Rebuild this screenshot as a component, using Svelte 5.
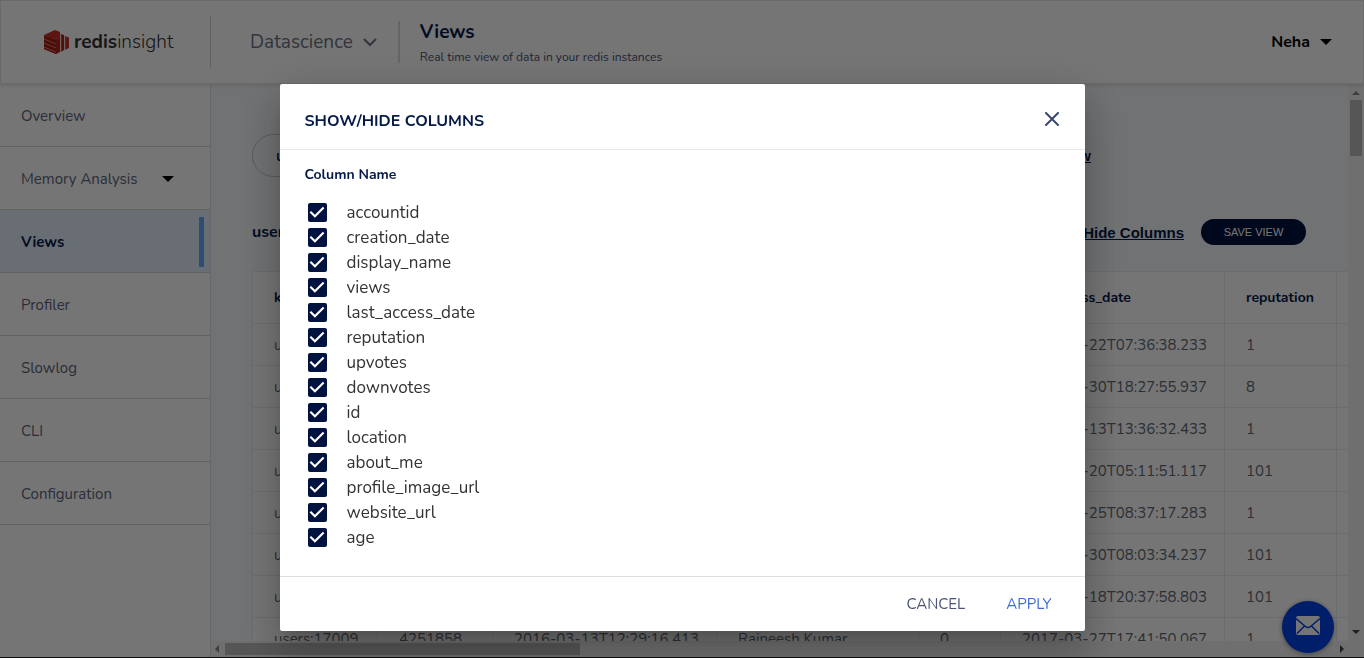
<script>
  const nav = ['Overview', 'Memory Analysis', 'Views', 'Profiler', 'Slowlog', 'CLI', 'Configuration'];
  const headers = ['key', 'accountid', 'creation_date', 'display_name', 'views', 'last_access_date', 'reputation', ''];
  const widths = [125, 115, 224, 202, 82, 224, 112, 120];
  const rows = [
    ['users:', '', '', '', '', '2017-02-22T07:36:38.233', '1', ''],
    ['users:', '', '', '', '', '2017-03-30T18:27:55.937', '8', ''],
    ['users:', '', '', '', '', '2016-03-13T13:36:32.433', '1', ''],
    ['users:', '', '', '', '', '2017-03-20T05:11:51.117', '101', ''],
    ['users:', '', '', '', '', '2017-02-25T08:37:17.283', '1', ''],
    ['users:', '', '', '', '', '2017-03-30T08:03:34.237', '101', ''],
    ['users:', '', '', '', '', '2017-03-18T20:37:58.803', '101', ''],
    ['users:17009', '4251858', '2016-03-13T12:29:16.413', 'Rajneesh Kumar', '0', '2017-03-27T17:41:50.067', '1', '']
  ];
  let columns = $state(
    ['accountid', 'creation_date', 'display_name', 'views', 'last_access_date', 'reputation', 'upvotes',
     'downvotes', 'id', 'location', 'about_me', 'profile_image_url', 'website_url', 'age']
      .map((name) => ({ name, shown: true }))
  );
</script>

<div class="app">
  <header class="top">
    <div class="logo">
      <svg width="26" height="24" viewBox="0 0 26 24" aria-hidden="true">
        <path d="M0 5 11 0 16 2V21L12 24 0 19Z" fill="#c6302b" />
        <path d="M0 5 12 9.500V24L0 19Z" fill="#a41e11" />
        <path d="M12 9 16 7V22L12 24Z" fill="#b0241c" />
        <path d="M0 9 12 14M0 13 12 18M0 17 12 22" stroke="#e08a84" stroke-width=".9" />
        <path d="M0 5 12 9.500 16 7.500" fill="none" stroke="#e4605a" stroke-width=".6" />
        <path d="M17 4 20 5V20L17 22Z" fill="#b02018" />
        <path d="M21 6 25 7.500V18L21 20Z" fill="#c6302b" />
        <path d="M17 4V22M21 6V20" stroke="#e08a84" stroke-width=".7" />
      </svg>
      <span><b>redis</b>insight</span>
    </div>
    <button class="db">Datascience
      <svg width="14" height="9" viewBox="0 0 14 9" aria-hidden="true"><path d="M1 1 7 7 13 1" fill="none" stroke="currentColor" stroke-width="2" /></svg>
    </button>
    <div class="page">
      <h1>Views</h1>
      <p>Real time view of data in your redis instances</p>
    </div>
    <button class="user">Neha <i class="caret"></i></button>
  </header>

  <div class="shell">
    <nav>
      {#each nav as item}
        <a href="#{item}" class:active={item === 'Views'}>
          {item}{#if item === 'Memory Analysis'}<i class="caret"></i>{/if}
        </a>
      {/each}
    </nav>

    <div class="scroller">
      <main>
        <div class="query">
          <input type="text" aria-label="Key pattern" value="users:*" />
          <a href="#new">Add new view</a>
        </div>
        <div class="toolbar">
          <h2>users</h2>
          <a href="#columns">Show/Hide Columns</a>
          <button>SAVE VIEW</button>
        </div>
        <table>
          <colgroup>
            {#each widths as w}<col style="width: {w}px" />{/each}
          </colgroup>
          <thead>
            <tr>{#each headers as h}<th>{h}</th>{/each}</tr>
          </thead>
          <tbody>
            {#each rows as row}
              <tr>{#each row as cell}<td>{cell}</td>{/each}</tr>
            {/each}
          </tbody>
        </table>
      </main>
      <div class="bar vertical" aria-hidden="true">
        <i class="arrow up"></i><span class="thumb"></span><i class="arrow down"></i>
      </div>
      <div class="bar horizontal" aria-hidden="true">
        <i class="arrow left"></i><span class="thumb"></span><i class="arrow right"></i>
      </div>
      <div class="corner"></div>
    </div>
  </div>

  <button class="mail" aria-label="Send a message">
    <svg width="24" height="19" viewBox="0 0 24 19" aria-hidden="true">
      <rect width="24" height="19" rx="2" fill="#fff" />
      <path d="M0 2.500 9.500 10.500Q12 12.500 14.500 10.500L24 2.500M1 17.500 8.500 10M23 17.500 15.500 10" fill="none" stroke="#0042e6" stroke-width="1.500" />
    </svg>
  </button>
</div>

<div class="backdrop">
  <div class="dialog" role="dialog" aria-modal="true" aria-labelledby="dialog-title">
    <div class="head">
      <h2 id="dialog-title">SHOW/HIDE COLUMNS</h2>
      <button aria-label="Close">
        <svg width="14" height="14" viewBox="0 0 14 14" aria-hidden="true"><path d="M1 1 13 13M13 1 1 13" stroke="#3a4870" stroke-width="2" stroke-linecap="round" /></svg>
      </button>
    </div>
    <div class="body">
      <h3>Column Name</h3>
      <ul>
        {#each columns as column}
          <li><label><input type="checkbox" bind:checked={column.shown} />{column.name}</label></li>
        {/each}
      </ul>
    </div>
    <div class="foot">
      <button>CANCEL</button>
      <button class="apply">APPLY</button>
    </div>
  </div>
</div>

<style>
  :global(body) {
    margin: 0;
    overflow: hidden;
    background: #fff;
  }
  .app, .backdrop {
    font-family: Nunito, "Open Sans", "Noto Sans", sans-serif;
  }
  .app *, .backdrop * {
    box-sizing: border-box;
  }
  h1, h2, h3, p, ul {
    margin: 0;
    padding: 0;
  }
  button {
    border: 0;
    padding: 0;
    background: none;
    font-family: inherit;
    cursor: pointer;
  }
  .app {
    display: flex;
    flex-direction: column;
    height: 100vh;
    box-sizing: border-box;
    border-bottom: 1px solid #222;
  }
  .caret {
    border: 6px solid transparent;
    border-top-color: #000;
    border-bottom: 0;
  }

  .top {
    display: flex;
    align-items: center;
    height: 84px;
    flex: none;
    border: 1px solid #e4e4e4;
    box-shadow: 0 1px 4px rgba(0, 0, 0, .15);
    z-index: 1;
  }
  .logo {
    display: flex;
    align-items: center;
    gap: 4px;
    width: 210px;
    height: 52px;
    padding-left: 43px;
    border-right: 1px solid #d0d0d0;
    font-size: 19px;
    font-weight: 300;
    color: #333;
  }
  .logo b {
    font-weight: 700;
  }
  .db {
    display: flex;
    align-items: center;
    gap: 10px;
    height: 42px;
    padding: 0 21px 0 39px;
    border-right: 2px solid #dcdcdc;
    font-size: 19px;
    color: #6c7284;
  }
  .page {
    padding: 2px 0 0 20px;
  }
  h1 {
    font-size: 19px;
    line-height: 28px;
    font-weight: 700;
    color: #061a48;
  }
  .page p {
    font-size: 12px;
    line-height: 22px;
    color: #4a5276;
  }
  .user {
    display: flex;
    align-items: center;
    gap: 10px;
    margin-left: auto;
    padding-right: 31px;
    font-size: 16px;
    font-weight: 700;
    color: #000;
  }

  .shell {
    display: flex;
    flex: 1;
    min-height: 0;
  }
  nav {
    flex: none;
    width: 211px;
    border-right: 1px solid #dde2ea;
  }
  nav a {
    display: flex;
    align-items: center;
    gap: 24px;
    height: 63px;
    padding: 2px 0 0 21px;
    border-bottom: 1px solid #d6d6d6;
    font-size: 15px;
    color: #5e657b;
    text-decoration: none;
  }
  nav a.active {
    justify-content: space-between;
    padding-right: 6px;
    background: #e3effc;
    font-weight: 700;
    color: #061a48;
  }
  nav a.active::after {
    content: "";
    width: 5px;
    height: 50px;
    background: #62a8f8;
  }

  .scroller {
    flex: 1;
    min-width: 0;
    display: grid;
    grid-template: minmax(0, 1fr) 16px / minmax(0, 1fr) 16px;
  }
  main {
    overflow: hidden;
    padding: 50px 0 0 41px;
    background: #f4f8fd;
  }
  .query, .toolbar {
    display: flex;
    align-items: center;
  }
  .query {
    justify-content: space-between;
    padding-right: 257px;
  }
  .query input {
    width: 320px;
    height: 43px;
    padding: 0 23px;
    border: 1px solid #c4c7cc;
    border-radius: 22px;
    background: transparent;
    font: 600 14px "Open Sans", sans-serif;
    color: #061a48;
  }
  .query a, .toolbar a {
    font: 700 15px "Liberation Sans", sans-serif;
    color: #061a48;
  }
  .toolbar {
    gap: 17px;
    padding: 42px 42px 26px 0;
  }
  .toolbar h2 {
    margin-right: auto;
    font-size: 16px;
    line-height: 26px;
    color: #061a48;
  }
  .toolbar button {
    width: 105px;
    height: 26px;
    border-radius: 13px;
    background: #001240;
    font: 400 11px "Liberation Sans", sans-serif;
    color: #fff;
  }
  table {
    table-layout: fixed;
    width: 1204px;
    border-collapse: collapse;
    background: #fff;
    font-size: 15px;
  }
  th, td {
    height: 42px;
    padding: 0 21px;
    border: 1px solid #e8ecf0;
    text-align: left;
    white-space: nowrap;
    color: #646873;
  }
  th {
    height: 52px;
    font-size: 14px;
    font-weight: 700;
    color: #061a48;
  }

  .bar, .corner {
    background: #f1f1f1;
  }
  .bar {
    display: flex;
    align-items: center;
    justify-content: space-between;
  }
  .vertical {
    flex-direction: column;
    padding: 7px 0;
  }
  .horizontal {
    padding: 0 4px;
  }
  .thumb {
    background: #bcbcbc;
  }
  .vertical .thumb {
    width: 12px;
    height: 56px;
    margin: 5px 0 auto;
  }
  .horizontal .thumb {
    width: 355px;
    height: 12px;
    margin: 0 auto 0 6px;
  }
  .arrow {
    border: 4px solid transparent;
  }
  .up { border-top: 0; border-bottom-color: #888; }
  .down { border-bottom: 0; border-top-color: #444; }
  .left { border-left: 0; border-right-color: #888; }
  .right { border-right: 0; border-left-color: #444; }

  .mail {
    position: fixed;
    right: 30px;
    bottom: 5px;
    display: grid;
    place-items: center;
    width: 52px;
    height: 52px;
    padding-bottom: 3px;
    border-radius: 50%;
    background: #0042e6;
    box-shadow: 0 1px 5px rgba(0, 0, 0, .4);
  }

  .backdrop {
    position: fixed;
    inset: 0;
    z-index: 2;
    display: flex;
    justify-content: center;
    align-items: flex-start;
    padding-top: 84px;
    background: rgba(0, 0, 0, .54);
  }
  .dialog {
    width: 805px;
    max-width: 100%;
    border-radius: 2px;
    background: #fff;
    box-shadow: 0 11px 15px -7px rgba(0, 0, 0, .2), 0 24px 38px 3px rgba(0, 0, 0, .14), 0 9px 46px 8px rgba(0, 0, 0, .12);
  }
  .head {
    display: flex;
    align-items: center;
    justify-content: space-between;
    height: 66px;
    padding: 4px 26px 0 25px;
    border-bottom: 1px solid #e8e8e8;
  }
  .head button {
    display: flex;
  }
  .head h2 {
    padding-top: 4px;
    font-size: 16px;
    font-weight: 700;
    color: #061a48;
  }
  .body {
    padding: 13px 25px 26px;
  }
  h3 {
    font-size: 14px;
    line-height: 24px;
    font-weight: 700;
    color: #061a48;
  }
  ul {
    padding-top: 13px;
    list-style: none;
  }
  label {
    display: flex;
    align-items: center;
    gap: 20px;
    height: 25px;
    padding-left: 3px;
    font-size: 17px;
    color: #333;
  }
  label input {
    appearance: none;
    display: grid;
    width: 19px;
    height: 19px;
    margin: 0;
    border: 2px solid #001240;
    border-radius: 2px;
  }
  label input:checked {
    border: 0;
    background: #001240;
  }
  label input:checked::before {
    content: "";
    background: #fff;
    clip-path: polygon(39% 78%, 11% 50%, 19% 42%, 39% 62%, 81% 20%, 89% 28%);
  }
  .foot {
    display: flex;
    align-items: center;
    justify-content: flex-end;
    gap: 41px;
    height: 55px;
    padding-right: 33px;
    border-top: 1px solid #dedede;
  }
  .foot button {
    font-size: 15px;
    color: #4a5276;
  }
  .foot .apply {
    color: #3b6ae0;
  }
</style>
